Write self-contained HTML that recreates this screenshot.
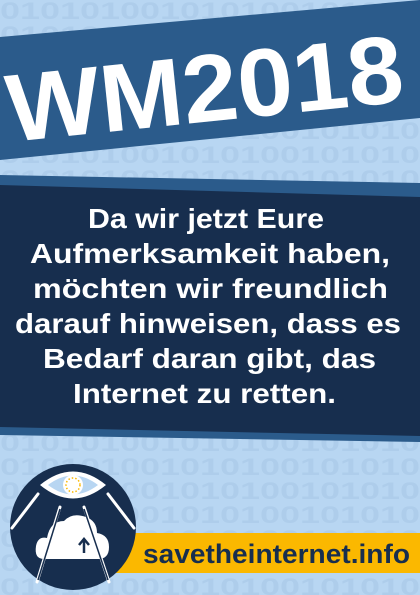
<!DOCTYPE html>
<html><head><meta charset="utf-8"><style>
html,body{margin:0;padding:0;width:420px;height:595px;overflow:hidden;background:#b8d6f2}
svg{display:block}
</style></head><body>
<svg width="420" height="595" viewBox="0 0 420 595" xmlns="http://www.w3.org/2000/svg">
<defs>
<pattern id="bin" width="140" height="24" patternUnits="userSpaceOnUse">
<text x="0" y="19" font-family="Liberation Sans, sans-serif" font-weight="bold" font-size="24" fill="#aecdeb" textLength="140" lengthAdjust="spacingAndGlyphs">0101010</text>
</pattern>
</defs>
<rect width="420" height="595" fill="#b8d6f2"/>
<rect width="420" height="595" fill="url(#bin)"/>
<polygon points="0,37 420,0 420,118 0,160" fill="#2b5b8b"/>
<text x="0" y="0" transform="translate(10,142) rotate(-5.9)" font-family="Liberation Sans, sans-serif" font-weight="bold" font-size="96" fill="#fff" textLength="398" lengthAdjust="spacingAndGlyphs">WM2018</text>
<polygon points="0,175 420,183 420,442 0,435" fill="#2b5b8b"/>
<polygon points="0,185 420,197 420,436 0,427" fill="#172e4e"/>
<g font-family="Liberation Sans, sans-serif" font-weight="bold" font-size="28" fill="#fff">
<text x="88" y="228" textLength="236" lengthAdjust="spacingAndGlyphs">Da wir jetzt Eure</text>
<text x="30" y="263" textLength="360" lengthAdjust="spacingAndGlyphs">Aufmerksamkeit haben,</text>
<text x="33" y="298" textLength="355" lengthAdjust="spacingAndGlyphs">möchten wir freundlich</text>
<text x="15" y="333" textLength="386" lengthAdjust="spacingAndGlyphs">darauf hinweisen, dass es</text>
<text x="43" y="368" textLength="333" lengthAdjust="spacingAndGlyphs">Bedarf daran gibt, das</text>
<text x="73" y="403" textLength="263" lengthAdjust="spacingAndGlyphs">Internet zu retten.</text>
</g>
<rect x="110" y="533" width="310" height="40" fill="#fbb800"/>
<text x="143" y="563" textLength="267" lengthAdjust="spacingAndGlyphs" font-family="Liberation Sans, sans-serif" font-weight="bold" font-size="27" fill="#172e4e">savetheinternet.info</text>
<circle cx="73" cy="527" r="63" fill="#172e4e"/>
<g stroke="#fff" stroke-width="3" stroke-linecap="round">
<line x1="38" y1="494" x2="12" y2="528"/>
<line x1="108" y1="494" x2="134" y2="528"/>
<line x1="60" y1="507" x2="37" y2="582"/>
<line x1="84" y1="507" x2="109" y2="582"/>
</g>
<path d="M40,485 Q73,458 106,485 Q73,512 40,485 Z" fill="#fff"/>
<path d="M48,485 Q73,466 98,485 Q73,504 48,485 Z" fill="#b8d6f2"/>
<circle cx="73" cy="485" r="10" fill="#fff"/>
<circle cx="73" cy="485" r="7" fill="none" stroke="#fbb800" stroke-width="1.5" stroke-dasharray="1.5 2"/>
<path d="M44,559 Q34,559 36,546 Q38,536 47,538 Q50,521 64,521 Q72,512 86,517 Q97,521 97,533 Q109,535 109,547 Q109,559 98,559 Z" fill="#fff"/>
<g stroke="#172e4e" stroke-width="2.5" fill="none">
<line x1="84" y1="553" x2="84" y2="540"/>
<path d="M79,545 L84,539 L89,545"/>
<line x1="60" y1="509" x2="38" y2="580" stroke-width="1.5"/>
<line x1="84" y1="509" x2="108" y2="580" stroke-width="1.5"/>
</g>
</svg>
</body></html>
